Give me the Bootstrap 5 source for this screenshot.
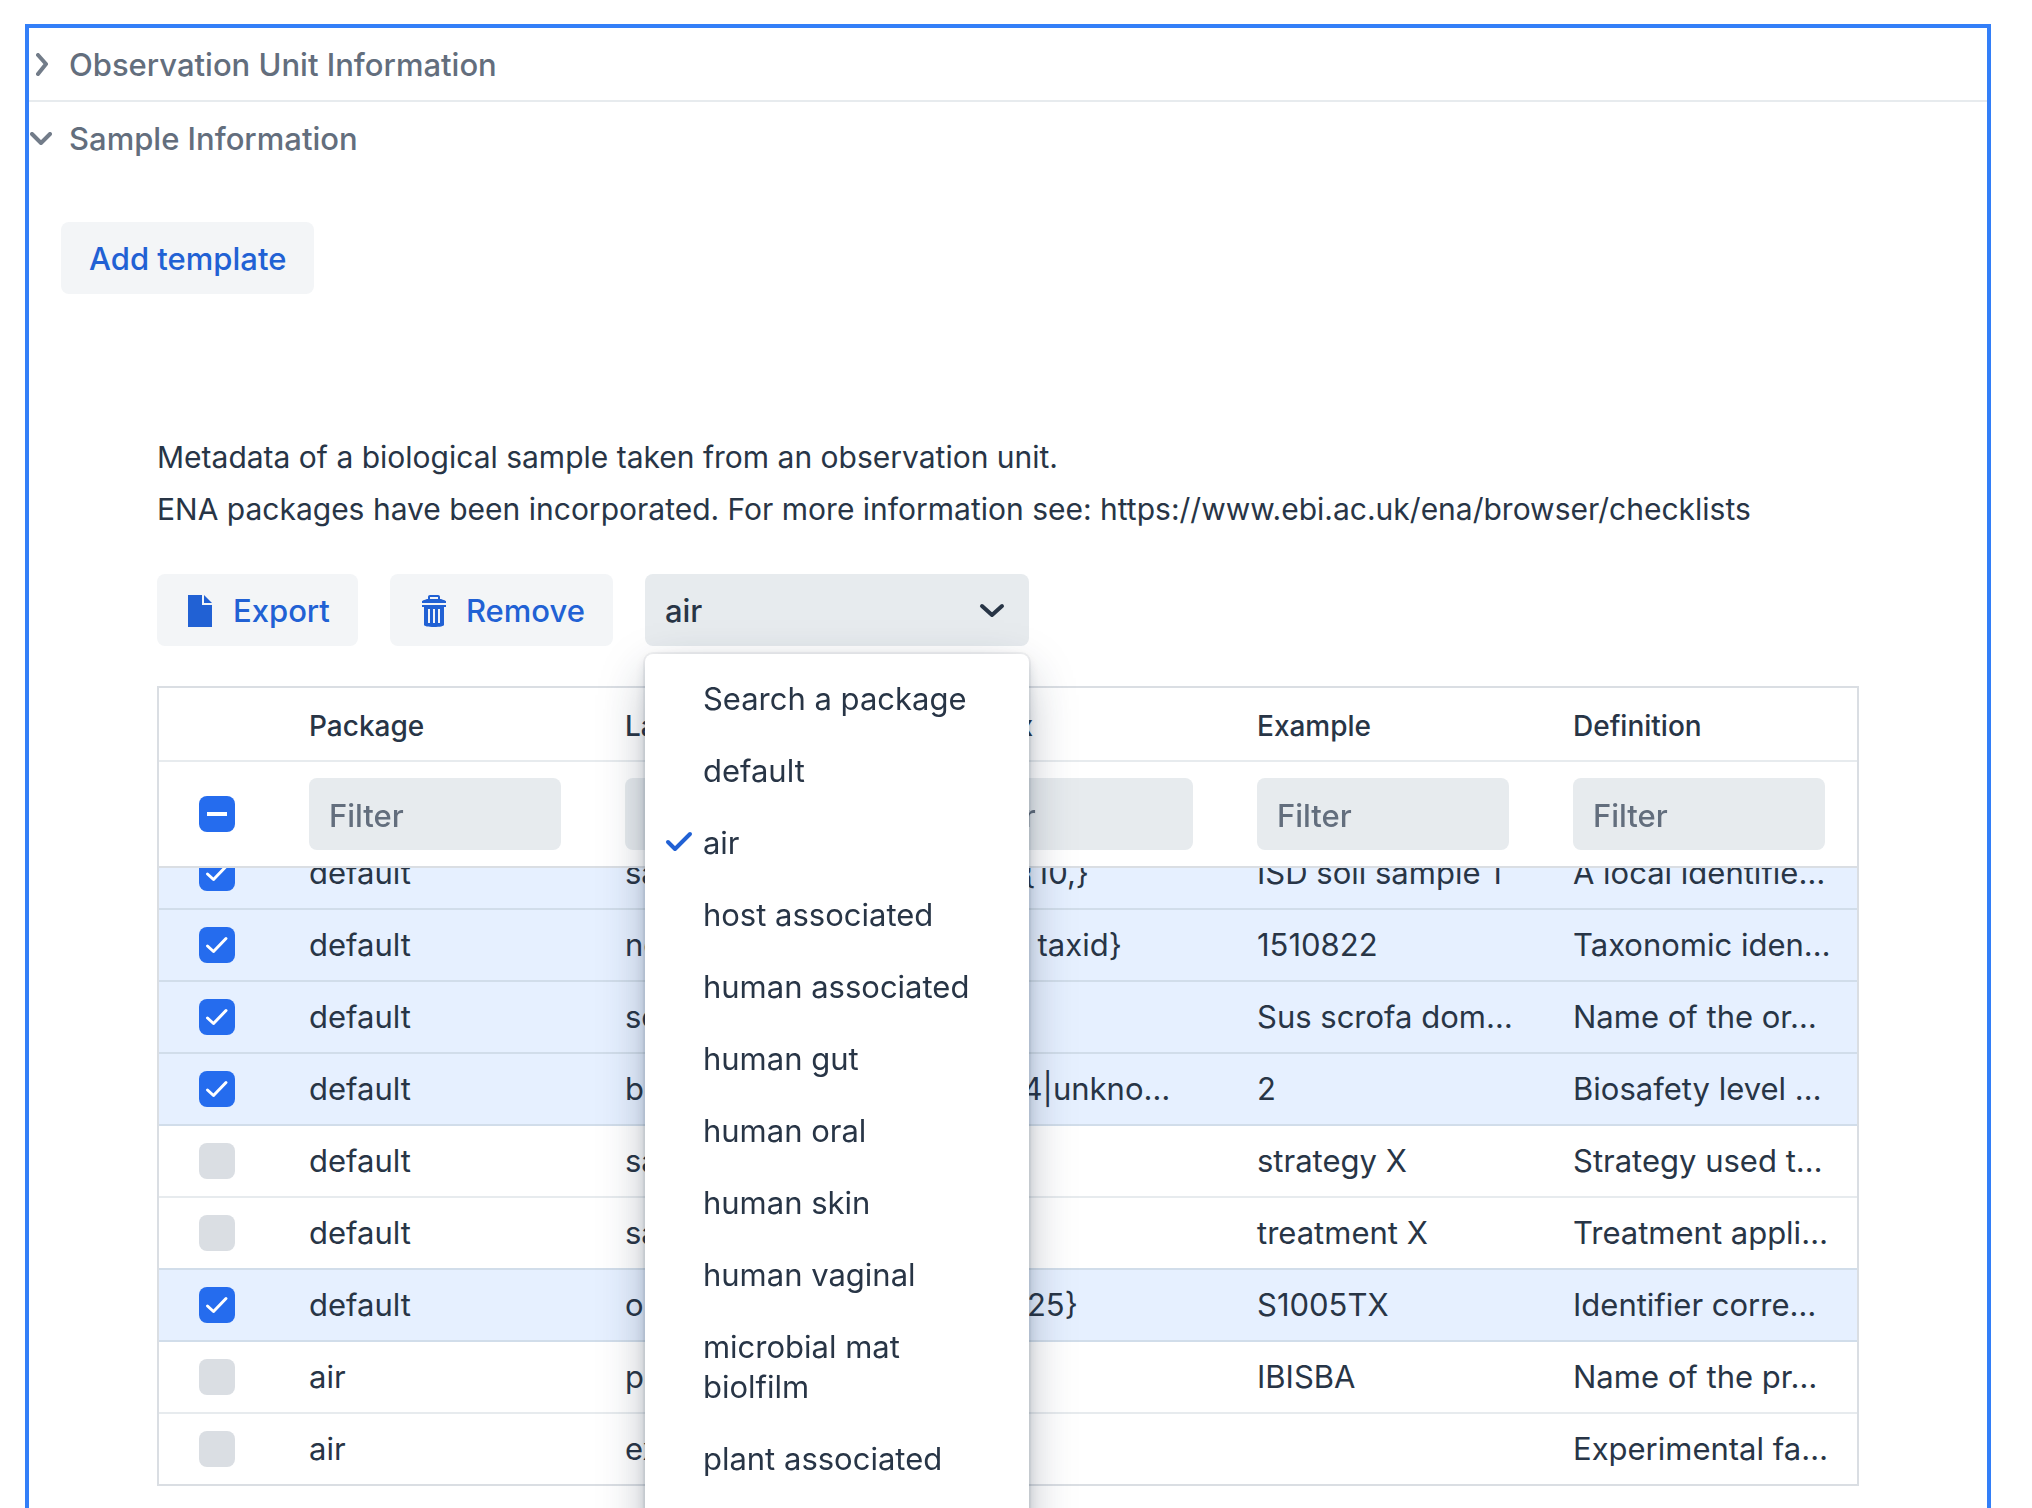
<!DOCTYPE html>
<html lang="en">
<head>
<meta charset="utf-8">
<meta name="viewport" content="width=device-width, initial-scale=1">
<title>Sample Information</title>
<link href="https://cdn.jsdelivr.net/npm/bootstrap@5.3.0/dist/css/bootstrap.min.css" rel="stylesheet">
<style>
  :root {
    --ink: #283546;
    --ink-soft: #636e7d;
    --blue: #2161d4;
    --blue-fill: #256cee;
    --tint-5: #f3f5f7;
    --tint-10: #e7ebee;
    --tint-20: #dadee3;
    --picked: #e6f0ff;
  }
  body {
    font-family: Inter, "Liberation Sans", sans-serif;
    font-size: 31px;
    line-height: 40px;
    color: var(--ink);
    background: #fff;
    height: 100vh;
    overflow: hidden;
  }
  .frame {
    margin: 24px 41px 0 25px;
    border: 4px solid #337ff8;
    border-bottom: 0;
    min-height: 100vh;
  }
  .fold { padding: 17px 0 15px; color: var(--ink-soft); font-weight: 500; background: none; border: 0; text-align: left; }
  .fold svg { width: 24px; height: 24px; margin-right: 16px; opacity: .9; }
  .fold-line { border-bottom: 2px solid var(--tint-10); }
  .stroke { fill: none; stroke: currentColor; stroke-linecap: round; stroke-linejoin: round; }
  .btn-soft {
    --bs-btn-color: var(--blue);
    --bs-btn-bg: var(--tint-5);
    --bs-btn-hover-bg: var(--tint-10);
    --bs-btn-hover-color: var(--blue);
    --bs-btn-border-width: 0;
    --bs-btn-border-radius: 8px;
    --bs-btn-padding-x: 28px;
    --bs-btn-font-size: 31px;
    --bs-btn-line-height: 40px;
    --bs-btn-font-weight: 500;
    padding-top: 17px;
    padding-bottom: 15px;
  }
  .btn-soft svg { width: 32px; height: 32px; fill: currentColor; }
  .intro-add { padding: 48px 32px 0; }
  .sheet { padding: 137px 128px 0; }
  .about { font-size: 30px; line-height: 52px; margin-bottom: 39px; }
  .toolbar-row { gap: 32px; }
  .picker { width: 384px; }
  .picker .form-select {
    height: 72px; padding: 17px 60px 15px 20px;
    font-size: 31px; line-height: 40px; font-weight: 500;
    color: var(--ink); background: var(--tint-10);
    border: 0; border-radius: 8px;
  }
  .picker-arrow { position: absolute; right: 24px; top: 24px; width: 26px; height: 24px; pointer-events: none; }
  .choices {
    position: absolute; top: 80px; left: 0; width: 100%; z-index: 5;
    margin: 0; padding: 9px 0 64px; list-style: none;
    background: #fff; border-radius: 8px;
    box-shadow: 0 0 0 2px rgba(27,43,65,.05), 0 4px 12px -2px rgba(27,43,65,.2), 0 16px 48px -8px rgba(27,43,65,.4);
  }
  .choices li { padding: 16px 40px 16px 20px; display: flex; }
  .choices li::before { content: ""; flex: 0 0 38px; }
  .choices li.chosen::before { content: none; }
  .tick { flex: 0 0 38px; height: 40px; color: var(--blue); }
  .grid-box {
    margin-top: 40px; height: 800px; overflow-y: auto; scrollbar-width: none;
    border: 2px solid var(--tint-20);
  }
  .grid-box::-webkit-scrollbar { display: none; }
  .grid { width: 100%; table-layout: fixed; border-collapse: separate; border-spacing: 0; }
  .grid thead { position: sticky; top: 0; z-index: 1; background: #fff; }
  .grid th { font-size: 28px; font-weight: 500; padding: 18px 32px 14px; height: 74px; border-bottom: 2px solid var(--tint-10); }
  .grid .filters td { height: 106px; border-bottom: 2px solid var(--tint-20); }
  .grid td { height: 72px; padding: 0 32px; white-space: nowrap; overflow: hidden; border-bottom: 2px solid var(--tint-10); }
  .grid tbody tr:last-child td { border-bottom: 0; height: 70px; }
  .grid .col-pick { width: 118px; }
  .grid td:first-child { padding: 0 0 0 40px; }
  .grid tr.picked td { background: var(--picked); border-bottom-color: #d1ddea; }
  .grid tr.pre td { border-bottom-color: #d1ddea; }
  .clip { overflow: hidden; text-overflow: ellipsis; }
  .grid .form-control {
    height: 72px; padding: 17px 20px 15px; font-size: 31px; line-height: 40px; font-weight: 500;
    background: var(--tint-10); border: 0; border-radius: 8px;
  }
  .grid .form-control::placeholder { color: var(--ink-soft); opacity: 1; }
  .grid .form-check-input {
    display: block; width: 36px; height: 36px; margin: 0; border: 0; border-radius: 8px;
    background-color: var(--tint-20); background-size: 36px 36px;
  }
  .grid .form-check-input:checked {
    background-color: var(--blue-fill);
    background-image: url("data:image/svg+xml,%3csvg xmlns='http://www.w3.org/2000/svg' viewBox='0 0 36 36'%3e%3cpath fill='none' stroke='%23fff' stroke-width='3' stroke-linecap='round' stroke-linejoin='round' d='M8.500 19l6 5.500L27 11.500'/%3e%3c/svg%3e");
  }
  .grid .form-check-input:indeterminate {
    background-color: var(--blue-fill);
    background-image: url("data:image/svg+xml,%3csvg xmlns='http://www.w3.org/2000/svg' viewBox='0 0 36 36'%3e%3cpath fill='%23fff' d='M8 16h20v4H8z'/%3e%3c/svg%3e");
  }
</style>
</head>
<body>
<main class="frame">
  <button type="button" class="fold fold-line d-flex align-items-center w-100" aria-expanded="false">
    <svg class="stroke" viewBox="0 0 24 24" stroke-width="4" aria-hidden="true"><path d="M9 2l8 9-8 10"/></svg>
    Observation Unit Information
  </button>
  <button type="button" class="fold d-flex align-items-center w-100" aria-expanded="true">
    <svg class="stroke" viewBox="0 0 24 24" stroke-width="4" aria-hidden="true"><path d="M3 7l9 9 9-9"/></svg>
    Sample Information
  </button>

  <div class="intro-add">
    <button type="button" class="btn btn-soft">Add template</button>
  </div>

  <section class="sheet">
    <p class="about">Metadata of a biological sample taken from an observation unit.<br>
      ENA packages have been incorporated. For more information see: https://www.ebi.ac.uk/ena/browser/checklists</p>

    <div class="d-flex toolbar-row">
      <button type="button" class="btn btn-soft d-flex align-items-center gap-3">
        <svg viewBox="0 0 16 16" aria-hidden="true"><path d="M8.500 5h5v11h-12V0h7zM9.500 4V0l4 4z"/></svg>
        Export
      </button>
      <button type="button" class="btn btn-soft d-flex align-items-center gap-3">
        <svg viewBox="0 0 16 16" aria-hidden="true"><path fill-rule="evenodd" d="M2 4V3s2-1 3-1V1c0-.600.400-1 1-1h4c.600 0 1 .400 1 1v1c1 0 3 1 3 1v1zM6 2h4V1H6zM2 5h12v1h-1v9c0 .500-2 1-5 1s-5-.500-5-1V6H2zM5 7v7h1V7zM7.500 7v7h1V7zM10 7v7h1V7z"/></svg>
        Remove
      </button>
      <div class="picker position-relative">
        <select class="form-select" aria-label="Package">
          <option>Search a package</option><option>default</option><option selected>air</option>
          <option>host associated</option><option>human associated</option><option>human gut</option>
          <option>human oral</option><option>human skin</option><option>human vaginal</option>
          <option>microbial mat biolfilm</option><option>plant associated</option>
        </select>
        <svg class="picker-arrow stroke" viewBox="0 0 26 24" stroke-width="4" aria-hidden="true"><path d="M3 8l10 9 10-9"/></svg>
        <ul class="choices" role="listbox" aria-label="Packages">
          <li role="option">Search a package</li>
          <li role="option">default</li>
          <li role="option" class="chosen" aria-selected="true"><svg class="tick stroke" viewBox="0 0 38 40" stroke-width="4" aria-hidden="true"><path d="M3 19l7 7L25 11"/></svg>air</li>
          <li role="option">host associated</li>
          <li role="option">human associated</li>
          <li role="option">human gut</li>
          <li role="option">human oral</li>
          <li role="option">human skin</li>
          <li role="option">human vaginal</li>
          <li role="option">microbial mat biolfilm</li>
          <li role="option">plant associated</li>
        </ul>
      </div>
    </div>

    <div class="grid-box" id="gridBox">
      <table class="grid">
        <thead>
          <tr><th class="col-pick"></th><th>Package</th><th>Label</th><th>Syntax</th><th>Example</th><th>Definition</th></tr>
          <tr class="filters">
            <td><input class="form-check-input" type="checkbox" id="pickAll" aria-label="Select all"></td>
            <td><input class="form-control" type="text" placeholder="Filter" aria-label="Filter package"></td>
            <td><input class="form-control" type="text" placeholder="Filter" aria-label="Filter label"></td>
            <td><input class="form-control" type="text" placeholder="Filter" aria-label="Filter syntax"></td>
            <td><input class="form-control" type="text" placeholder="Filter" aria-label="Filter example"></td>
            <td><input class="form-control" type="text" placeholder="Filter" aria-label="Filter definition"></td>
          </tr>
        </thead>
        <tbody>
          <tr class="picked"><td><input class="form-check-input" type="checkbox" checked aria-label="Select row 1"></td><td>default</td><td><div class="clip">sample identifier</div></td><td>{text}{10,}</td><td>ISD soil sample 1</td><td>A local identifie…</td></tr>
          <tr class="picked"><td><input class="form-check-input" type="checkbox" checked aria-label="Select row 2"></td><td>default</td><td><div class="clip">ncbi taxonomy id</div></td><td>{NCBI taxid}</td><td>1510822</td><td>Taxonomic iden…</td></tr>
          <tr class="picked"><td><input class="form-check-input" type="checkbox" checked aria-label="Select row 3"></td><td>default</td><td><div class="clip">scientific name</div></td><td>{text}</td><td>Sus scrofa dom…</td><td>Name of the or…</td></tr>
          <tr class="picked"><td><input class="form-check-input" type="checkbox" checked aria-label="Select row 4"></td><td>default</td><td><div class="clip">biosafety level</div></td><td>1|2|3|4|unkno…</td><td>2</td><td>Biosafety level …</td></tr>
          <tr><td><input class="form-check-input" type="checkbox" aria-label="Select row 5"></td><td>default</td><td><div class="clip">sampling strategy</div></td><td>{text}</td><td>strategy X</td><td>Strategy used t…</td></tr>
          <tr class="pre"><td><input class="form-check-input" type="checkbox" aria-label="Select row 6"></td><td>default</td><td><div class="clip">sample treatment</div></td><td>{text}</td><td>treatment X</td><td>Treatment appli…</td></tr>
          <tr class="picked"><td><input class="form-check-input" type="checkbox" checked aria-label="Select row 7"></td><td>default</td><td><div class="clip">organism identifier</div></td><td>{text:,25}</td><td>S1005TX</td><td>Identifier corre…</td></tr>
          <tr><td><input class="form-check-input" type="checkbox" aria-label="Select row 8"></td><td>air</td><td><div class="clip">project name</div></td><td>{text}</td><td>IBISBA</td><td>Name of the pr…</td></tr>
          <tr><td><input class="form-check-input" type="checkbox" aria-label="Select row 9"></td><td>air</td><td><div class="clip">experimental factor</div></td><td>{text}</td><td></td><td>Experimental fa…</td></tr>
        </tbody>
      </table>
    </div>
  </section>
</main>
<script src="https://cdn.jsdelivr.net/npm/bootstrap@5.3.0/dist/js/bootstrap.bundle.min.js"></script>
<script>
  document.getElementById('pickAll').indeterminate = true;
  document.getElementById('gridBox').scrollTop = 30;
</script>
</body>
</html>
